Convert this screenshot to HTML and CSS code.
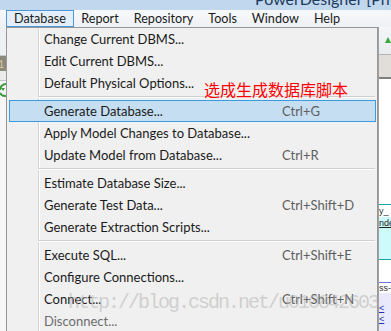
FILE: index.html
```html
<!DOCTYPE html>
<html lang="en">
<head>
    <meta charset="UTF-8">
    <title>PowerDesigner - Database menu</title>
    <link rel="stylesheet" href="styles.css">
</head>
<body>
    <div class="titlebar">
        <span class="title">PowerDesigner [PhysicalDataModel_1]</span>
    </div>

    <div class="menubar">
        <span class="menu-item active">Database</span>
        <span class="menu-item">Report</span>
        <span class="menu-item">Repository</span>
        <span class="menu-item">Tools</span>
        <span class="menu-item">Window</span>
        <span class="menu-item">Help</span>
    </div>

    <div class="workspace">
        <!-- bits of the app behind the menu, left side -->
        <div class="side side-left">
            <div class="tb-light"></div>
            <div class="tb-tile">1</div>
            <div class="tb-gap"></div>
            <div class="tb-icon">
                <svg width="6" height="18" viewBox="0 0 6 18">
                    <path d="M6 3 A6 6 0 0 0 0 9" fill="none" stroke="#3a9a3a" stroke-width="2"/>
                    <path d="M0 12 A6 6 0 0 0 6 15" fill="none" stroke="#3a9a3a" stroke-width="2"/>
                    <path d="M1 7 L5 7 L3 10 Z" fill="#3a9a3a"/>
                </svg>
            </div>
            <div class="tb-rest"></div>
        </div>

        <div class="dropdown">
            <div class="row"><span>Change Current DBMS...</span></div>
            <div class="row"><span>Edit Current DBMS...</span></div>
            <div class="row"><span>Default Physical Options...</span></div>
            <div class="sep"></div>
            <div class="row selected"><span>Generate Database...</span><span class="key">Ctrl+G</span></div>
            <div class="row"><span>Apply Model Changes to Database...</span></div>
            <div class="row"><span>Update Model from Database...</span><span class="key">Ctrl+R</span></div>
            <div class="sep"></div>
            <div class="row"><span>Estimate Database Size...</span></div>
            <div class="row"><span>Generate Test Data...</span><span class="key">Ctrl+Shift+D</span></div>
            <div class="row"><span>Generate Extraction Scripts...</span></div>
            <div class="sep"></div>
            <div class="row"><span>Execute SQL...</span><span class="key">Ctrl+Shift+E</span></div>
            <div class="row"><span>Configure Connections...</span></div>
            <div class="row"><span>Connect...</span><span class="key">Ctrl+Shift+N</span></div>
            <div class="row disabled"><span>Disconnect...</span></div>
        </div>

        <!-- bits of the app behind the menu, right side -->
        <div class="side side-right">
            <div class="rt-toolbar">
                <svg width="12" height="10" viewBox="0 0 12 10">
                    <path d="M6 8 L9 2 L12 8 Z" fill="#3aa63a"/>
                </svg>
            </div>
            <div class="rt-band"></div>
            <div class="rt-white"></div>
            <div class="tbl-head">y_</div>
            <div class="tbl-body"><u>nde</u></div>
            <div class="rt-white2"></div>
            <div class="ref-head">ss-</div>
            <div class="ref-body"><u>&lt;</u><br><u>&lt;</u></div>
        </div>
    </div>

    <div class="note">选成生成数据库脚本</div>
    <div class="watermark">http://blog.csdn.net/u010842603</div>
</body>
</html>
```

FILE: styles.css
```css
body {
    margin: 0;
    width: 391px;
    height: 331px;
    overflow: hidden;
    position: relative;
    background: #fff;
    font-family: 'Lato', 'Noto Sans CJK SC', sans-serif;
    font-size: 13px;
    color: #1a1a1a;
}

.titlebar {
    height: 10px;
    overflow: hidden;
    background: #c1d7ee;
}

.title {
    display: block;
    margin-top: -9px;
    padding-left: 255px;
    font-size: 16px;
    line-height: 16px;
    color: #1e3a5c;
    white-space: nowrap;
}

.menubar {
    height: 17px;
    display: flex;
    padding-left: 6px;
    font-size: 12.6px;
    background: linear-gradient(#f7f8fa, #eef1f5);
}

.menu-item {
    padding: 0 6.5px;
    line-height: 15px;
    border: 1px solid transparent;
}

.menu-item.active {
    padding: 0 7px;
    background: #e3eef9;
    border-color: #4a98d8;
}

.workspace {
    display: flex;
    height: 304px;
}

.side {
    display: flex;
    flex-direction: column;
    overflow: hidden;
}

.side-left {
    width: 6px;
}

.tb-light { height: 28px; background: #eef1f4; border-bottom: 1px solid #c9c9c9; }
.tb-tile {
    height: 15px;
    background: #8c8a7c;
    color: #d8c89a;
    font-size: 11px;
    line-height: 15px;
    text-indent: -2px;
}
.tb-gap { height: 9px; background: #ebebeb; border-bottom: 1px solid #c4c4c4; }
.tb-icon { height: 19px; background: #f4f4f4; }
.tb-rest { flex: 1; background: #f7f7f7; }

.dropdown {
    width: 371px;
    border: 1px solid #979797;
    border-bottom: none;
    background-color: #f0f0f0;
    background-image: linear-gradient(to right, transparent 31px, #d5d5d5 31px, #d5d5d5 32px, #fff 32px, #fff 33px, transparent 33px);
}

.row {
    display: grid;
    grid-template-columns: 238px auto;
    height: 20px;
    line-height: 21px;
    margin: 0 1px 0 2px;
    padding-left: 34px;
    border: 1px solid transparent;
    white-space: nowrap;
}

.row.selected {
    background: #c5def2;
    border-color: #3c9ae0;
}

.row.disabled {
    color: #6d6d6d;
}

.key {
    color: #5e5e5e;
}

.sep {
    height: 6px;
    margin: 0 2px 0 31px;
    background: linear-gradient(transparent 2px, #cfcfcf 2px, #cfcfcf 3px, #fff 3px, #fff 4px, transparent 4px);
}

.side-right {
    width: 12px;
    border-left: 1px solid #a0a0a0;
    font-family: 'Liberation Sans', sans-serif;
    font-size: 9px;
}

.rt-toolbar { height: 28px; background: linear-gradient(#f4f6f8, #e9ecef); border-bottom: 1px solid #b5b5b5; padding-top: 8px; box-sizing: border-box; }
.rt-band { height: 22px; background: #e1ded9; border-bottom: 2px solid #7f7f7f; }
.rt-white { height: 125px; background: #fff; border-bottom: 1px solid #1aa5a5; }
.tbl-head { height: 12px; line-height: 12px; background: #fff; color: #333; }
.tbl-body { height: 42px; line-height: 12px; background: #cdfafa; color: #222; border-bottom: 1px solid #1aa5a5; }
.rt-white2 { height: 22px; background: #fff; border-bottom: 1px solid #7070e0; }
.ref-head { height: 10px; line-height: 10px; background: #fff; color: #333; }
.ref-body { flex: 1; background: #e9e9fb; color: #2030b0; line-height: 11px; padding-top: 10px; }

.note {
    position: absolute;
    left: 204px;
    top: 81px;
    font-family: 'Noto Sans CJK SC', sans-serif;
    font-size: 16px;
    line-height: 17px;
    color: #ff0000;
}

.watermark {
    position: absolute;
    left: 68px;
    top: 292px;
    font-family: 'Liberation Mono', monospace;
    font-size: 20px;
    letter-spacing: -2px;
    line-height: 22px;
    color: rgba(175, 175, 175, 0.5);
    white-space: nowrap;
}
```
